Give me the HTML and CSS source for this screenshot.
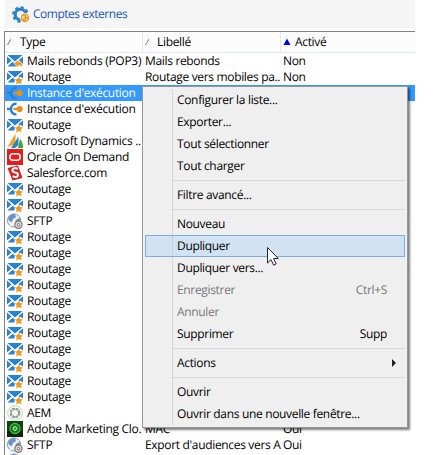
FILE: index.html
```
<!DOCTYPE html>
<html lang="fr">
<head>
<meta charset="utf-8">
<title>Comptes externes</title>
<link rel="stylesheet" href="styles.css">
</head>
<body>
<svg class="defs" aria-hidden="true">
  <symbol id="envelope" viewBox="0 0 16 16">
    <path fill="#2a82d2" d="M.5 2H15.5L8 8.6Z M0 3.4V11.6L4.5 7.5Z M16 3.4V11.6L11.5 7.5Z M.5 13.5L5.6 8.8L8 10.8L10.4 8.8L12 10V13.5Z"/>
  </symbol>
  <symbol id="i-mail" viewBox="0 0 16 16">
    <use href="#envelope"/>
    <path d="M7 10.5L11.5 6V8.3C15 8.5 16 11 15.3 15C14.5 13 13.5 12.4 11.5 12.5V15Z" fill="#f09a20" stroke="#fff" stroke-width=".7"/>
  </symbol>
  <symbol id="i-route" viewBox="0 0 16 16">
    <use href="#envelope"/>
    <path d="M8 9L10 8H16V16H7Z" fill="#fff"/>
    <path fill="#2a82d2" d="M12.2 6.8L16 3.4V9.5Z"/>
    <path d="M12 7.2L13.2 10.1L16 10.4L13.9 12.4L14.5 15.6L11.8 13.9L9.1 15.6L9.7 12.4L7.7 10.4L10.7 10.1Z" fill="#f09a20"/>
  </symbol>
  <symbol id="i-inst" viewBox="0 0 16 16">
    <path d="M9.5 2.8C2.2 2.2 2.2 14 9.5 13.4M0 8H4" fill="none" stroke="#2a82d2" stroke-width="2.4"/>
    <path d="M6.5 8H10" stroke="#f08c10" stroke-width="2"/><circle cx="12.6" cy="8" r="3.1" fill="#f08c10"/>
  </symbol>
  <symbol id="i-ms" viewBox="0 0 16 16">
    <path fill="#f4a020" d="M.5 14L8.5 .5V11Z"/><path fill="#2b82c4" d="M4 15L11.5 3.5V12L8 15Z"/><path fill="#38a838" d="M11 15L13 6Q16 9 16 15Z"/>
  </symbol>
  <symbol id="i-oracle" viewBox="0 0 16 16">
    <path fill="#e71c1c" d="M0 0H16V16H0Z"/><rect x="2.8" y="4.7" width="10.4" height="6.6" rx="3.3" fill="none" stroke="#fff" stroke-width="1.6"/>
  </symbol>
  <symbol id="i-sales" viewBox="0 0 16 16">
    <path fill="#d82420" d="M.5 3L11 .5L15.5 13L5.5 15.5Z"/>
    <path d="M10.8 4C8 2 4.8 3.6 5.5 6C6.2 8.5 10.4 6.6 10.9 9.3C11.3 12 8 13 5.8 11" fill="none" stroke="#fff" stroke-width="2"/>
  </symbol>
  <symbol id="i-sftp" viewBox="0 0 16 16">
    <circle cx="7" cy="7.5" r="6.6" fill="#e8eef6" stroke="#8098bd"/>
    <path fill="#6d91c4" d="M1 5Q3 1 8 1L9 4L6 6L5 9L2 8ZM8 7L13 5V8L9 10Z"/>
    <path d="M3 13L12 3" stroke="#fff"/>
    <circle cx="11.5" cy="11.7" r="3.6" fill="#e8e5df" stroke="#80746b" stroke-width="1.2"/><path fill="#80746b" d="M9.8 10.4h3.4v3H9.8Z"/><path fill="#f3f0ed" d="M10.6 11.1h1.8v1.4h-1.8Z"/>
  </symbol>
  <symbol id="i-aem" viewBox="0 0 16 16">
    <circle cx="8" cy="8" r="7.3" fill="#fff" stroke="#b7dca5"/>
    <circle cx="8" cy="8" r="4.2" fill="none" stroke="#5a7568" stroke-width="2.2" stroke-dasharray="2.8 .5"/><circle cx="8" cy="8" r="4.2" fill="none" stroke="#eef5ee" stroke-width=".7"/>
  </symbol>
  <symbol id="i-mac" viewBox="0 0 16 16">
    <path fill="#173d1c" d="M0 0H16V16H0Z"/><path fill="#0d2510" d="M0 10H16V16H0Z"/>
    <circle cx="8" cy="7.5" r="5" fill="#176b1b" stroke="#35c735" stroke-width="1.3"/><circle cx="8" cy="7.5" r="2" fill="#30a42f" stroke="#c5f2b8"/>
  </symbol>
</svg>

<header class="bar">
  <svg class="gear" viewBox="0 0 17 16"><circle cx="8" cy="8" r="5" fill="none" stroke="#2a82d2" stroke-width="3"/><circle cx="8" cy="8" r="6.8" fill="none" stroke="#2a82d2" stroke-width="2.2" stroke-dasharray="2.8 2.54"/><circle cx="12.2" cy="11.2" r="4.7" fill="#fff"/><circle cx="12.2" cy="11.2" r="4.1" fill="#f09a28"/><path d="M9.4 9.2L12 9.8L11.6 11.8L10 12ZM13 8L15.4 10L13.6 10.3ZM13 12L15 12L13 14.3Z" fill="#ffe5b5"/></svg>
  <span class="title">Comptes externes</span>
</header>

<main class="list">
  <div class="head">
    <div><svg class="sort" viewBox="0 0 8 8"><path d="M.5 7L4 1" stroke="#777"/><path d="M4 1L7.5 7H1" fill="none" stroke="#eee"/></svg><span>Type</span></div>
    <div><svg class="sort" viewBox="0 0 8 8"><path d="M.5 7L4 1" stroke="#777"/><path d="M4 1L7.5 7H1" fill="none" stroke="#eee"/></svg><span>Libellé</span></div>
    <div><svg class="sort" viewBox="0 0 8 8"><path d="M4 .5L7.5 7H.5Z" fill="#00f"/></svg><span>Activé</span></div>
  </div>
  <div class="row"><svg><use href="#i-mail"/></svg><span class="wide">Mails rebonds (POP3)</span><span>Mails rebonds</span><span>Non</span></div>
  <div class="row"><svg><use href="#i-route"/></svg><span>Routage</span><span>Routage vers mobiles pa..</span><span>Non</span></div>
  <div class="row selected"><svg><use href="#i-inst"/></svg><span>Instance d'exécution</span></div>
  <div class="row"><svg><use href="#i-inst"/></svg><span>Instance d'exécution</span></div>
  <div class="row"><svg><use href="#i-route"/></svg><span>Routage</span></div>
  <div class="row"><svg><use href="#i-ms"/></svg><span class="wide">Microsoft Dynamics ..</span></div>
  <div class="row"><svg><use href="#i-oracle"/></svg><span>Oracle On Demand</span></div>
  <div class="row"><svg><use href="#i-sales"/></svg><span>Salesforce.com</span></div>
  <div class="row"><svg><use href="#i-route"/></svg><span>Routage</span></div>
  <div class="row"><svg><use href="#i-route"/></svg><span>Routage</span></div>
  <div class="row"><svg><use href="#i-sftp"/></svg><span>SFTP</span></div>
  <div class="row"><svg><use href="#i-route"/></svg><span>Routage</span></div>
  <div class="row"><svg><use href="#i-route"/></svg><span>Routage</span></div>
  <div class="row"><svg><use href="#i-route"/></svg><span>Routage</span></div>
  <div class="row"><svg><use href="#i-route"/></svg><span>Routage</span></div>
  <div class="row"><svg><use href="#i-route"/></svg><span>Routage</span></div>
  <div class="row"><svg><use href="#i-route"/></svg><span>Routage</span></div>
  <div class="row"><svg><use href="#i-route"/></svg><span>Routage</span></div>
  <div class="row"><svg><use href="#i-route"/></svg><span>Routage</span></div>
  <div class="row"><svg><use href="#i-route"/></svg><span>Routage</span></div>
  <div class="row"><svg><use href="#i-route"/></svg><span>Routage</span></div>
  <div class="row"><svg><use href="#i-route"/></svg><span>Routage</span></div>
  <div class="row"><svg><use href="#i-aem"/></svg><span>AEM</span></div>
  <div class="row"><svg><use href="#i-mac"/></svg><span class="wide">Adobe Marketing Clo.</span><span>MAC</span><span>Oui</span></div>
  <div class="row"><svg><use href="#i-sftp"/></svg><span>SFTP</span><span>Export d'audiences vers A</span><span>Oui</span></div>
  <div class="row"><svg><use href="#i-sftp"/></svg></div>
</main>

<nav class="menu">
  <div class="item">Configurer la liste...</div>
  <div class="item">Exporter...</div>
  <div class="item">Tout sélectionner</div>
  <div class="item">Tout charger</div>
  <hr>
  <div class="item">Filtre avancé...</div>
  <hr>
  <div class="item">Nouveau</div>
  <div class="item hover">Dupliquer</div>
  <div class="item">Dupliquer vers...</div>
  <div class="item off">Enregistrer<span>Ctrl+S</span></div>
  <div class="item off">Annuler</div>
  <div class="item">Supprimer<span>Supp</span></div>
  <hr>
  <div class="item">Actions<svg class="arrow" viewBox="0 0 4 8"><path d="M0 0L4 4L0 8Z" fill="#222"/></svg></div>
  <hr>
  <div class="item">Ouvrir</div>
  <div class="item">Ouvrir dans une nouvelle fenêtre...</div>
</nav>
<svg class="cursor" viewBox="0 0 12 19"><path d="M.5 .5V16L4 12.6L6.7 18.2L9.2 17L6.6 11.5H11.3Z" fill="#fff" stroke="#223"/></svg>
</body>
</html>
```
FILE: styles.css
```
* { box-sizing: border-box; }
body {
  margin: 0;
  width: 437px;
  height: 455px;
  overflow: hidden;
  position: relative;
  background: #fff;
  color: #000;
  font: 12px/16px "Open Sans", "Noto Sans", sans-serif;
  letter-spacing: -.33px;
  text-rendering: geometricPrecision;
}
.defs { position: absolute; width: 0; height: 0; }
.bar {
  display: flex;
  align-items: center;
  height: 28px;
  width: 410px;
  margin-left: 5px;
  padding-left: 7px;
  background: #f5f5f5;
}
.gear { width: 18px; height: 17px; margin-right: 3px; }
.title { color: #2456bd; letter-spacing: -.48px; }
.list {
  width: 411px;
  height: 424px;
  margin: 3px 0 0 4px;
  overflow: hidden;
  border: solid #7f838f;
  border-width: 1px 0 0 1px;
}
.head {
  display: grid;
  grid-template-columns: 138px 138px 134px;
  height: 21px;
  background: #fcfcfc;
  border-bottom: 1px solid #dfeaf9;
}
.head div { display: flex; align-items: center; padding-left: 2px; border-right: 1px solid #dfeaf9; }
.head div:last-child { border-right: 0; }
.sort { width: 8px; height: 8px; margin-right: 5px; fill: none; }
.head div + div .sort { margin-right: 4px; }
.row {
  display: grid;
  grid-template-columns: 20px 118px 138px 100px;
  height: 16px;
  padding-left: 2px;
}
.row svg { width: 16px; height: 16px; }
.row span { white-space: nowrap; }
.row .wide { letter-spacing: -.28px; }
.selected { background: #3399ff; color: #fff; }
.menu {
  position: absolute;
  left: 142px;
  top: 86px;
  width: 266px;
  height: 342px;
  padding: 2px;
  border: 1px solid #979797;
  background: linear-gradient(90deg, transparent 29px, #d7d7d7 29px, #d7d7d7 30px, transparent 30px) 0 2px / 100% 336px no-repeat #efefef;
  box-shadow: 2px 2px 2px rgba(0, 0, 0, .5);
}
.item {
  display: flex;
  align-items: center;
  justify-content: space-between;
  height: 22px;
  padding: 0 18px 0 32px;
  white-space: nowrap;
}
.hover {
  background: linear-gradient(90deg, transparent 26px, #bfd3e8 26px, #bfd3e8 27px, transparent 27px) #d1e2f2;
  border: 1px solid #78aee5;
  padding-left: 31px;
}
.off { color: #777; }
.arrow { width: 4px; height: 8px; margin-right: -9px; }
hr { height: 1px; margin: 3px 0 3px 27px; border: 0; background: #d7d7d7; }
.cursor { position: absolute; left: 267px; top: 247px; width: 12px; height: 19px; }
```
